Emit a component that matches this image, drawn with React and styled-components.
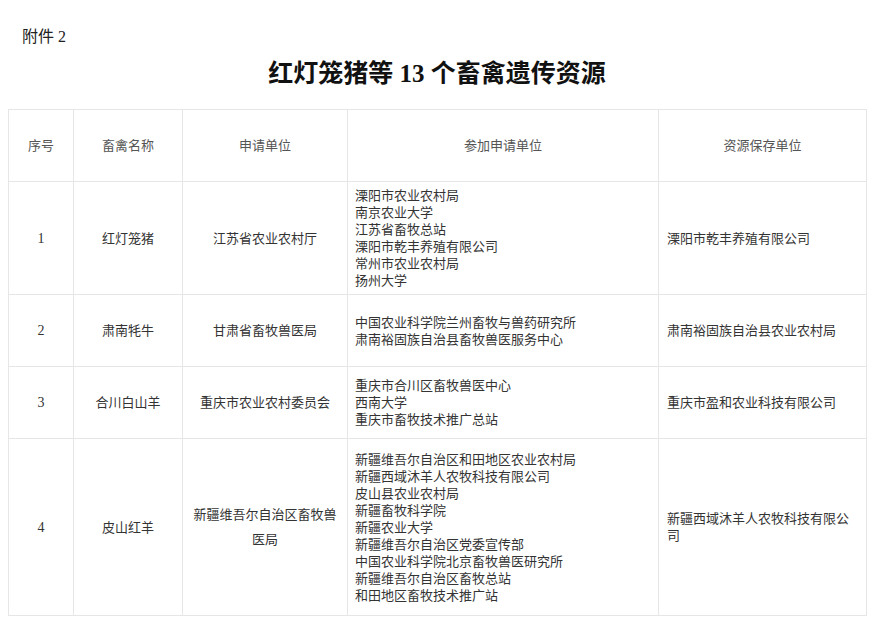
import React from "react";
import styled, { createGlobalStyle } from "styled-components";

const GlobalStyle = createGlobalStyle`
  html, body {
    margin: 0;
    padding: 0;
    background: #ffffff;
  }
  body {
    font-family: "Liberation Serif", "Noto Sans CJK SC", serif;
    color: #333;
  }
`;

const Page = styled.div`
  width: 873px;
  padding: 27px 7px 0 8px;
  box-sizing: border-box;
`;

const Attachment = styled.div`
  font-size: 16px;
  line-height: 20px;
  padding-left: 14px;
  color: #222;
`;

const Title = styled.h1`
  margin: 9px 0 17px;
  text-align: center;
  font-size: 25px;
  line-height: 36px;
  font-weight: 700;
  color: #111;
`;

const Table = styled.table`
  width: 858px;
  border-collapse: collapse;
  table-layout: fixed;
  font-size: 13px;
`;

const Row = styled.tr`
  height: ${(p) => p.$h}px;
`;

const Cell = styled.td`
  border: 1px solid #e6e6e6;
  padding: 0 ${(p) => (p.$pad != null ? p.$pad : 6)}px;
  vertical-align: middle;
  text-align: ${(p) => (p.$left ? "left" : "center")};
  line-height: ${(p) => p.$lh || 17}px;
  font-size: ${(p) => p.$fs || 13}px;
  color: ${(p) => (p.$head ? "#555" : "#333")};
  word-break: break-all;
`;

const Line = styled.div`
  white-space: nowrap;
`;

const cols = [65, 109, 165, 311, 208];

const rows = [
  {
    h: 113,
    no: "1",
    name: "红灯笼猪",
    applicant: "江苏省农业农村厅",
    partners: [
      "溧阳市农业农村局",
      "南京农业大学",
      "江苏省畜牧总站",
      "溧阳市乾丰养殖有限公司",
      "常州市农业农村局",
      "扬州大学",
    ],
    keeper: "溧阳市乾丰养殖有限公司",
  },
  {
    h: 72,
    no: "2",
    name: "肃南牦牛",
    applicant: "甘肃省畜牧兽医局",
    partners: ["中国农业科学院兰州畜牧与兽药研究所", "肃南裕固族自治县畜牧兽医服务中心"],
    keeper: "肃南裕固族自治县农业农村局",
  },
  {
    h: 72,
    no: "3",
    name: "合川白山羊",
    applicant: "重庆市农业农村委员会",
    partners: ["重庆市合川区畜牧兽医中心", "西南大学", "重庆市畜牧技术推广总站"],
    keeper: "重庆市盈和农业科技有限公司",
  },
  {
    h: 177,
    no: "4",
    name: "皮山红羊",
    applicant: "新疆维吾尔自治区畜牧兽医局",
    partners: [
      "新疆维吾尔自治区和田地区农业农村局",
      "新疆西域沐羊人农牧科技有限公司",
      "皮山县农业农村局",
      "新疆畜牧科学院",
      "新疆农业大学",
      "新疆维吾尔自治区党委宣传部",
      "中国农业科学院北京畜牧兽医研究所",
      "新疆维吾尔自治区畜牧总站",
      "和田地区畜牧技术推广站",
    ],
    keeper: "新疆西域沐羊人农牧科技有限公司",
  },
];

export default function App() {
  return (
    <Page>
      <GlobalStyle />
      <Attachment>附件 2</Attachment>
      <Title>红灯笼猪等 13 个畜禽遗传资源</Title>
      <Table>
        <colgroup>
          {cols.map((w, i) => (
            <col key={i} style={{ width: w }} />
          ))}
        </colgroup>
        <tbody>
          <Row $h={72}>
            <Cell $head>序号</Cell>
            <Cell $head>畜禽名称</Cell>
            <Cell $head>申请单位</Cell>
            <Cell $head>参加申请单位</Cell>
            <Cell $head>资源保存单位</Cell>
          </Row>
          {rows.map((r) => (
            <Row key={r.no} $h={r.h}>
              <Cell $fs={14}>{r.no}</Cell>
              <Cell>{r.name}</Cell>
              <Cell $lh={25}>{r.applicant}</Cell>
              <Cell $left $pad={7}>
                {r.partners.map((p) => (
                  <Line key={p}>{p}</Line>
                ))}
              </Cell>
              <Cell $left $pad={8}>{r.keeper}</Cell>
            </Row>
          ))}
        </tbody>
      </Table>
    </Page>
  );
}
